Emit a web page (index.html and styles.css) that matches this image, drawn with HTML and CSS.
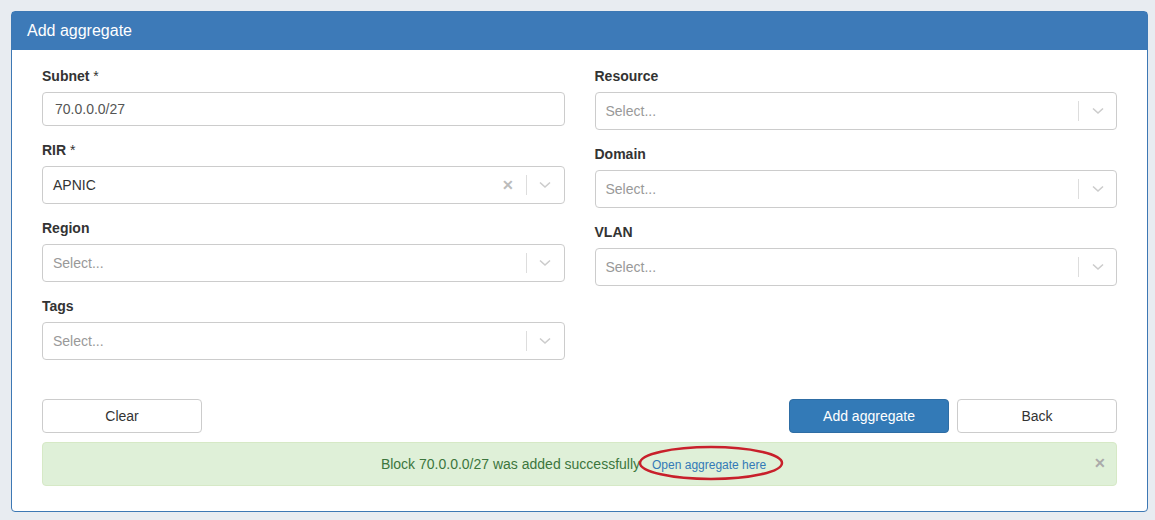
FILE: index.html
```html
<!DOCTYPE html>
<html lang="en">
<head>
    <meta charset="UTF-8">
    <title>Add aggregate</title>
    <link rel="stylesheet" href="styles.css">
</head>
<body>
    <div class="panel">
        <div class="panel-heading">Add aggregate</div>
        <div class="panel-body">
            <div class="columns">
                <div class="col">
                    <div class="form-group">
                        <label>Subnet <span class="req">*</span></label>
                        <input class="text-input" type="text" value="70.0.0.0/27">
                    </div>
                    <div class="form-group">
                        <label>RIR <span class="req">*</span></label>
                        <div class="select">
                            <span class="value">APNIC</span>
                            <span class="clear">&#x2715;</span>
                            <span class="sep"></span>
                            <span class="arrow"><svg width="12" height="8" viewBox="0 0 12 8"><path d="M1 1.5 L6 6 L11 1.5" fill="none" stroke="#ccc" stroke-width="1.6"/></svg></span>
                        </div>
                    </div>
                    <div class="form-group">
                        <label>Region</label>
                        <div class="select">
                            <span class="placeholder">Select...</span>
                            <span class="sep"></span>
                            <span class="arrow"><svg width="12" height="8" viewBox="0 0 12 8"><path d="M1 1.5 L6 6 L11 1.5" fill="none" stroke="#ccc" stroke-width="1.6"/></svg></span>
                        </div>
                    </div>
                    <div class="form-group">
                        <label>Tags</label>
                        <div class="select">
                            <span class="placeholder">Select...</span>
                            <span class="sep"></span>
                            <span class="arrow"><svg width="12" height="8" viewBox="0 0 12 8"><path d="M1 1.5 L6 6 L11 1.5" fill="none" stroke="#ccc" stroke-width="1.6"/></svg></span>
                        </div>
                    </div>
                </div>
                <div class="col">
                    <div class="form-group">
                        <label>Resource</label>
                        <div class="select">
                            <span class="placeholder">Select...</span>
                            <span class="sep"></span>
                            <span class="arrow"><svg width="12" height="8" viewBox="0 0 12 8"><path d="M1 1.5 L6 6 L11 1.5" fill="none" stroke="#ccc" stroke-width="1.6"/></svg></span>
                        </div>
                    </div>
                    <div class="form-group">
                        <label>Domain</label>
                        <div class="select">
                            <span class="placeholder">Select...</span>
                            <span class="sep"></span>
                            <span class="arrow"><svg width="12" height="8" viewBox="0 0 12 8"><path d="M1 1.5 L6 6 L11 1.5" fill="none" stroke="#ccc" stroke-width="1.6"/></svg></span>
                        </div>
                    </div>
                    <div class="form-group">
                        <label>VLAN</label>
                        <div class="select">
                            <span class="placeholder">Select...</span>
                            <span class="sep"></span>
                            <span class="arrow"><svg width="12" height="8" viewBox="0 0 12 8"><path d="M1 1.5 L6 6 L11 1.5" fill="none" stroke="#ccc" stroke-width="1.6"/></svg></span>
                        </div>
                    </div>
                </div>
            </div>

            <div class="actions">
                <button class="btn">Clear</button>
                <div class="right-actions">
                    <button class="btn btn-primary">Add aggregate</button>
                    <button class="btn">Back</button>
                </div>
            </div>

            <div class="alert">
                <span>Block 70.0.0.0/27 was added successfully</span>
                <span class="link-wrap">
                    <a href="#" class="alert-link">Open aggregate here</a>
                    <svg class="marker" width="148" height="38" viewBox="0 0 148 38"><ellipse cx="74" cy="19" rx="71" ry="16" fill="none" stroke="#c8202b" stroke-width="2.5"/></svg>
                </span>
                <span class="close">&#x2715;</span>
            </div>
        </div>
    </div>
</body>
</html>
```

FILE: styles.css
```css
body {
    margin: 0;
    padding: 11px;
    background-color: #e8ecf1;
    font-family: "Liberation Sans", Arial, sans-serif;
    font-size: 14px;
    color: #333;
}
.panel {
    width: 1135px;
    background: white;
    border: 1px solid #3d78b4;
    border-radius: 4px;
}
.panel-heading {
    background-color: #3d7ab8;
    color: white;
    font-size: 16px;
    height: 38px;
    line-height: 37px;
    padding: 0 15px;
}
.panel-body {
    padding: 16px 30px 25px 30px;
}
.columns {
    display: flex;
    gap: 30px;
}
.col {
    flex: 1;
}
.form-group {
    margin-bottom: 14px;
}
label {
    display: block;
    font-weight: bold;
    line-height: 20px;
    margin-bottom: 6px;
}
.req {
    font-weight: normal;
}
.text-input {
    box-sizing: border-box;
    width: 100%;
    height: 34px;
    padding: 6px 12px;
    border: 1px solid #ccc;
    border-radius: 4px;
    font-family: inherit;
    font-size: 14px;
    color: #555;
    display: block;
}
.select {
    box-sizing: border-box;
    height: 38px;
    border: 1px solid #ccc;
    border-radius: 4px;
    display: flex;
    align-items: center;
    padding-left: 10px;
}
.value {
    flex: 1;
    color: #333;
}
.placeholder {
    flex: 1;
    color: #999;
}
.clear {
    color: #bbb;
    font-size: 14px;
    font-weight: bold;
    margin-right: 12px;
}
.sep {
    width: 1px;
    height: 20px;
    background-color: #ddd;
}
.arrow {
    width: 37px;
    display: flex;
    justify-content: center;
    align-items: center;
}
.actions {
    display: flex;
    justify-content: space-between;
    margin-top: 25px;
}
.right-actions {
    display: flex;
    gap: 8px;
}
.btn {
    width: 160px;
    height: 34px;
    background: white;
    border: 1px solid #ccc;
    border-radius: 4px;
    font-family: inherit;
    font-size: 14px;
    color: #333;
}
.btn-primary {
    background-color: #337ab7;
    border-color: #2e6da4;
    color: white;
}
.alert {
    position: relative;
    margin-top: 9px;
    height: 44px;
    box-sizing: border-box;
    background-color: #dff0d8;
    border: 1px solid #d6e9c6;
    border-radius: 4px;
    color: #3c763d;
    display: flex;
    justify-content: center;
    align-items: center;
    gap: 12px;
}
.link-wrap {
    position: relative;
    margin-right: 12px;
}
.alert-link {
    color: #337ab7;
    font-size: 12px;
    text-decoration: none;
}
.marker {
    position: absolute;
    left: -15px;
    top: -12px;
}
.close {
    position: absolute;
    right: 10px;
    top: 12px;
    color: #aaa;
    font-size: 14px;
    font-weight: bold;
}
```
